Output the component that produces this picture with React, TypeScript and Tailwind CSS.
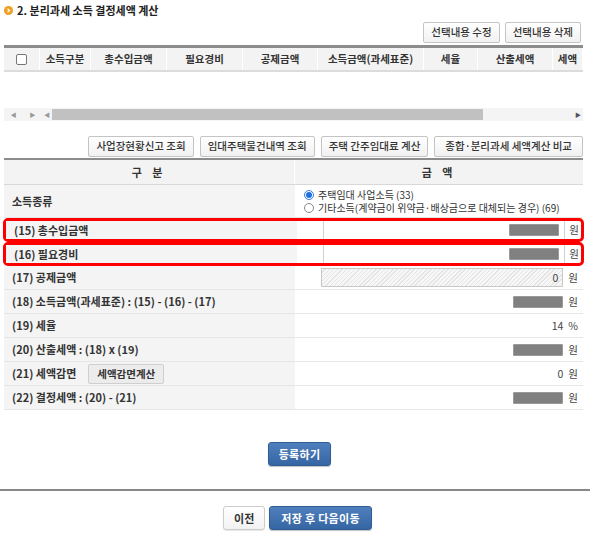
import React from 'react'

const font = { fontFamily: '"Noto Sans CJK KR", "Noto Sans", sans-serif' }

function GrayBtn({ children, className = '' }: { children: React.ReactNode; className?: string }) {
  return (
    <button
      className={`h-[21px] border border-[#c4c4c4] rounded-[2px] bg-gradient-to-b from-white to-[#f1f1f1] px-[7px] text-[10.5px] leading-none text-[#333] font-medium whitespace-nowrap ${className}`}
    >
      {children}
    </button>
  )
}

function BlueBtn({ children, className = '' }: { children: React.ReactNode; className?: string }) {
  return (
    <button
      className={`h-[24px] rounded-[3px] border border-[#2f5d96] bg-gradient-to-b from-[#4f80bd] to-[#3565a3] px-[10px] text-[11px] leading-none font-bold text-white tracking-[0.3px] shadow-[0_1px_1px_rgba(0,0,0,0.25)] ${className}`}
    >
      {children}
    </button>
  )
}

function Masked() {
  return <span className="inline-block w-[50px] h-[12px] bg-[#808080] border border-[#999] rounded-[1px]" />
}

const topCols: { label: string; w: string }[] = [
  { label: '소득구분', w: 'w-[51px]' },
  { label: '총수입금액', w: 'w-[76px]' },
  { label: '필요경비', w: 'w-[76px]' },
  { label: '공제금액', w: 'w-[75px]' },
  { label: '소득금액(과세표준)', w: 'w-[106px]' },
  { label: '세율', w: 'w-[54px]' },
  { label: '산출세액', w: 'w-[75px]' },
  { label: '세액', w: 'w-[30px]' },
]

function Row({
  label,
  children,
  extra,
  outlined,
}: {
  label: string
  children: React.ReactNode
  extra?: React.ReactNode
  outlined?: boolean
}) {
  return (
    <div
      className={`flex h-[24px] ${
        outlined
          ? 'border-[3px] border-[#ff0000] rounded-[5px] -mx-[1px]'
          : 'border-b border-[#e6e6e6]'
      }`}
    >
      <div className="w-[291px] shrink-0 bg-[#f4f4f4] flex items-center pl-[8px] text-[11px] font-bold text-[#333] gap-[12px]">
        <span>{label}</span>
        {extra}
      </div>
      <div
        className={`flex-1 flex items-center justify-end gap-[5px] text-[10.5px] text-[#444] ${
          outlined ? 'pr-[2px]' : 'pr-[5px]'
        }`}
      >
        {children}
      </div>
    </div>
  )
}

export default function App() {
  return (
    <div style={font} className="w-[595px] h-[549px] bg-white overflow-hidden">
      <div className="pl-[4px] w-[583px]">
        {/* title */}
        <div className="flex items-center gap-[4px] h-[18px] pt-[2px]">
          <span className="w-[9px] h-[9px] rounded-full bg-[#f0a020] flex items-center justify-center">
            <svg width="5" height="5" viewBox="0 0 5 5">
              <path d="M1.5 0.8 L3.5 2.5 L1.5 4.2" stroke="white" strokeWidth="1.2" fill="none" />
            </svg>
          </span>
          <span className="text-[11px] font-bold text-[#222]">2. 분리과세 소득 결정세액 계산</span>
        </div>

        <div className="flex justify-end gap-[5px] mt-[4px] pr-[2px]">
          <GrayBtn>선택내용 수정</GrayBtn>
          <GrayBtn>선택내용 삭제</GrayBtn>
        </div>

        {/* top grid */}
        <div className="mt-[2px] border-t-[3px] border-[#8c8c8c] overflow-hidden">
          <div className="flex h-[24px] bg-[#f3f3f3] border-b-[2px] border-[#dcdcdc] text-[10.5px] font-bold text-[#333] whitespace-nowrap">
            <div className="w-[36px] shrink-0 flex items-center justify-center border-r border-white">
              <span className="w-[11px] h-[11px] border border-[#777] rounded-[2px] bg-white" />
            </div>
            {topCols.map((c) => (
              <div key={c.label} className={`${c.w} shrink-0 flex items-center justify-center border-r border-white`}>
                {c.label}
              </div>
            ))}
          </div>
          <div className="h-[36px]" />
          <div className="flex items-center h-[13px] bg-[#f4f4f4] text-[#999]">
            <div className="w-[38px] flex items-center justify-around text-[6px]">
              <span>◀</span>
              <span>▶</span>
            </div>
            <span className="text-[6px] w-[10px] text-center">◀</span>
            <div className="w-[431px] h-[11px] bg-[#c1c1c1]" />
            <div className="flex-1" />
            <span className="text-[6px] w-[10px] text-center text-[#555]">▶</span>
          </div>
        </div>

        <div className="flex justify-end gap-[6px] mt-[15px]">
          <GrayBtn>사업장현황신고 조회</GrayBtn>
          <GrayBtn>임대주택물건내역 조회</GrayBtn>
          <GrayBtn>주택 간주임대료 계산</GrayBtn>
          <GrayBtn className="px-[10px]">종합·분리과세 세액계산 비교</GrayBtn>
        </div>

        {/* main table */}
        <div className="mt-[1px] border-t-[2px] border-[#8c8c8c]">
          <div className="flex h-[25px] bg-[#f3f3f3] border-b border-[#d8d8d8] text-[11px] font-bold text-[#333]">
            <div className="w-[291px] flex items-center justify-center border-r border-white tracking-[4px]">구 분</div>
            <div className="flex-1 flex items-center justify-center tracking-[4px]">금 액</div>
          </div>

          <div className="flex h-[33px] border-b border-[#e6e6e6]">
            <div className="w-[291px] shrink-0 bg-[#f4f4f4] flex items-center pl-[8px] text-[11px] font-bold text-[#333]">
              소득종류
            </div>
            <div className="flex-1 flex flex-col justify-center pl-[9px] text-[10px] text-[#333] whitespace-nowrap">
              <label className="flex items-center gap-[4px] h-[12px] leading-[12px]">
                <span className="w-[10px] h-[10px] rounded-full border border-[#3a7bd5] bg-white flex items-center justify-center">
                  <span className="w-[6px] h-[6px] rounded-full bg-[#1e6fe0]" />
                </span>
                <span>주택임대 사업소득 (33)</span>
              </label>
              <label className="flex items-center gap-[4px] h-[12px] leading-[12px] mt-[1px]">
                <span className="w-[10px] h-[10px] rounded-full border border-[#888] bg-white" />
                <span>기타소득(계약금이 위약금·배상금으로 대체되는 경우) (69)</span>
              </label>
            </div>
          </div>

          <Row label="(15) 총수입금액" outlined>
            <div className="flex-1 ml-[26px] h-full border-l border-[#d0d0d0] flex items-center justify-end">
              <Masked />
            </div>
            <span className="border-l border-[#d0d0d0] pl-[4px] h-full flex items-center">원</span>
          </Row>
          <Row label="(16) 필요경비" outlined>
            <div className="flex-1 ml-[26px] h-full border-l border-[#d0d0d0] flex items-center justify-end">
              <Masked />
            </div>
            <span className="border-l border-[#d0d0d0] pl-[4px] h-full flex items-center">원</span>
          </Row>
          <Row label="(17) 공제금액">
            <div className="flex-1 ml-[26px] h-[19px] border border-[#c8c8c8] bg-[repeating-linear-gradient(135deg,#f7f7f7_0px,#f7f7f7_2px,#e4e4e4_2px,#e4e4e4_3px)] flex items-center justify-end pr-[4px]">
              0
            </div>
            <span>원</span>
          </Row>
          <Row label="(18) 소득금액(과세표준) : (15) - (16) - (17)">
            <Masked />
            <span>원</span>
          </Row>
          <Row label="(19) 세율">
            <span>14</span>
            <span>%</span>
          </Row>
          <Row label="(20) 산출세액 : (18) x (19)">
            <Masked />
            <span>원</span>
          </Row>
          <Row
            label="(21) 세액감면"
            extra={
              <button className="h-[20px] px-[8px] border border-[#cfcfcf] rounded-[2px] bg-[#ececec] text-[10.5px] font-bold text-[#333]">
                세액감면계산
              </button>
            }
          >
            <span>0</span>
            <span>원</span>
          </Row>
          <Row label="(22) 결정세액 : (20) - (21)">
            <Masked />
            <span>원</span>
          </Row>
        </div>

        <div className="flex justify-center mt-[32px] pl-[12px]">
          <BlueBtn>등록하기</BlueBtn>
        </div>
      </div>

      <div className="mt-[23px] w-[590px] h-[2px] bg-[#888]" />

      <div className="flex justify-center gap-[4px] mt-[15px]">
        <button className="h-[24px] px-[10px] rounded-[3px] border border-[#ccc] bg-gradient-to-b from-white to-[#f2f2f2] text-[11px] font-bold text-[#333] shadow-[0_1px_1px_rgba(0,0,0,0.1)]">
          이전
        </button>
        <BlueBtn className="px-[11px]">저장 후 다음이동</BlueBtn>
      </div>
    </div>
  )
}
